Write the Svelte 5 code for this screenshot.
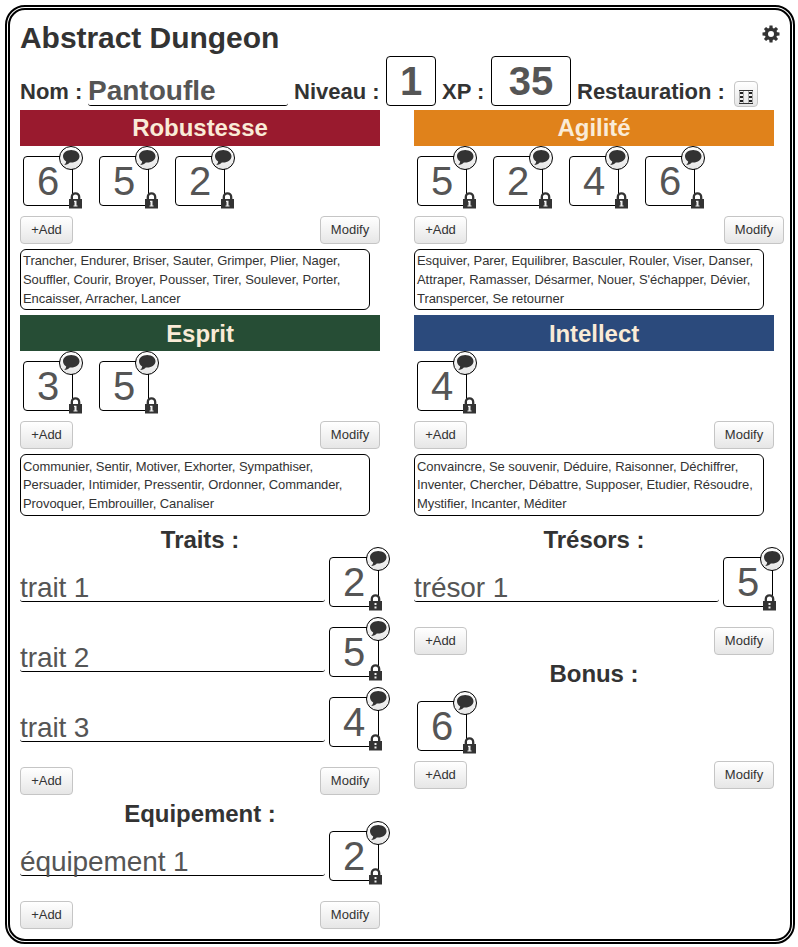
<script>
  const stats = [
    {
      name: 'Robustesse', color: '#991a2e', dice: [6, 5, 2],
      verbs: ['Trancher, Endurer, Briser, Sauter, Grimper, Plier, Nager,', 'Souffler, Courir, Broyer, Pousser, Tirer, Soulever, Porter,', 'Encaisser, Arracher, Lancer']
    },
    {
      name: 'Agilité', color: '#e0821b', dice: [5, 2, 4, 6], wide: true,
      verbs: ['Esquiver, Parer, Equilibrer, Basculer, Rouler, Viser, Danser,', "Attraper, Ramasser, Désarmer, Nouer, S'échapper, Dévier,", 'Transpercer, Se retourner']
    },
    {
      name: 'Esprit', color: '#264d35', dice: [3, 5],
      verbs: ['Communier, Sentir, Motiver, Exhorter, Sympathiser,', 'Persuader, Intimider, Pressentir, Ordonner, Commander,', 'Provoquer, Embrouiller, Canaliser']
    },
    {
      name: 'Intellect', color: '#2b4a7c', dice: [4],
      verbs: ['Convaincre, Se souvenir, Déduire, Raisonner, Déchiffrer,', 'Inventer, Chercher, Débattre, Supposer, Etudier, Résoudre,', 'Mystifier, Incanter, Méditer']
    }
  ];
  const traits = [['trait 1', 2], ['trait 2', 5], ['trait 3', 4]];
  const teeth = [0, 45, 90, 135, 180, 225, 270, 315];
</script>

{#snippet die(value, dotted = false)}
  <div class="die" class:single={dotted}>
    {value}
    <span class="note">
      <svg width="20" height="18" viewBox="0 0 20 18">
        <path d="M10.200 1C5.600 1 2 3.800 2 7.300c0 2.200 1.300 4 3.200 5.100-.2 1.500-.9 2.600-2.100 3.600 2.600-.1 4.500-1 5.700-2.500.5.1.9.1 1.400.1 4.600 0 8.300-2.800 8.300-6.300S14.800 1 10.200 1z" fill="#333" />
      </svg>
    </span>
    <svg class="lock" width="13" height="17" viewBox="0 0 13 17">
      <path d="M2.800 8V5a3.700 3.700 0 0 1 7.400 0V8" fill="none" stroke="#333" stroke-width="2.300" />
      <path d="M0 7h13v9.500H0z" fill="#333" />
      {#if dotted}
        <path d="M5.500 9h2v2h-2zM5.500 12.500h2v2h-2z" fill="#eee" />
      {:else}
        <path d="M5 8.800h2.500v4.700H8.500v1h-4v-1h1V10H5z" fill="#eee" />
      {/if}
    </svg>
  </div>
{/snippet}

{#snippet actions(wide = false)}
  <div class="actions" class:wide>
    <button>+Add</button>
    <button class="modify">Modify</button>
  </div>
{/snippet}

{#snippet item(name, value)}
  <div class="item">
    <div class="item-name">{name}</div>
    {@render die(value, true)}
  </div>
{/snippet}

<main>
  <header>
    <h1>Abstract Dungeon</h1>
    <svg class="gear" width="18" height="18" viewBox="-9 -9 18 18">
      {#each teeth as angle}
        <path d="M-1.900 -4.500L-1.500 -8.500H1.500L1.900 -4.500z" fill="#333" transform="rotate({angle})" />
      {/each}
      <circle r="4.600" fill="none" stroke="#333" stroke-width="3.200" />
    </svg>
  </header>
  <div class="identity">
    <span class="label nom">Nom :</span>
    <span class="name">Pantoufle</span>
    <span class="label niveau">Niveau :</span>
    <span class="box level">1</span>
    <span class="label xp">XP :</span>
    <span class="box points">35</span>
    <span class="label rest">Restauration :</span>
    <button class="restore" aria-label="Restauration">
      <svg width="14" height="14" viewBox="0 0 14 14" fill="none">
        <path d="M0 .5h14M0 13.500h14" stroke="#333" />
        <path d="M.5 1v12M4.500 1v12M9.500 1v12M13.500 1v12" stroke="#aaa" />
        <path d="M1 2h3v2H1zM1 6h3v2H1zM1 10h3v2H1zM10 2h3v2h-3zM10 6h3v2h-3zM10 10h3v2h-3z" fill="#222" />
      </svg>
    </button>
  </div>

  <div class="stats">
    {#each stats as stat, i}
      <section>
        <h2 class="bar" class:low={i > 1} style:background={stat.color}>{stat.name}</h2>
        <div class="dice">
          {#each stat.dice as value}{@render die(value)}{/each}
        </div>
        {@render actions(stat.wide)}
        <div class="verbs" class:tall={i > 1}>
          {#each stat.verbs as line}<div>{line}</div>{/each}
        </div>
      </section>
    {/each}
  </div>

  <div class="lists">
    <section>
      <h2>Traits :</h2>
      {#each traits as [name, value]}{@render item(name, value)}{/each}
      {@render actions()}
      <h2>Equipement :</h2>
      {@render item('équipement 1', 2)}
      {@render actions()}
    </section>
    <section>
      <h2>Trésors :</h2>
      {@render item('trésor 1', 5)}
      {@render actions()}
      <h2>Bonus :</h2>
      <div class="dice">{@render die(6)}</div>
      {@render actions()}
    </section>
  </div>
</main>

<style>
  :global(body) { background: #fff; }
  main {
    box-sizing: border-box;
    width: 790px;
    height: 939px;
    margin: 5px 0 0 5px;
    padding: 0 10px;
    border: 5px double #000;
    border-radius: 20px;
    font-family: 'Liberation Sans', Arial, sans-serif;
    font-size: 13px;
    color: #333;
  }
  h1, h2 { margin: 0; font-weight: bold; }
  header { display: flex; justify-content: space-between; height: 46px; }
  h1 { font-size: 30px; line-height: 56px; white-space: nowrap; letter-spacing: -0.05px; }
  .gear { margin: 15px 0 0; }
  .identity { display: flex; align-items: flex-end; height: 54px; box-sizing: border-box; }
  .identity > * { box-sizing: border-box; flex: none; margin-bottom: 4px; white-space: nowrap; }
  .label { font-size: 22px; font-weight: bold; line-height: 30px; }
  .identity .label { margin-bottom: 3px; }
  .nom { width: 68px; }
  .name {
    width: 200px;
    height: 33px;
    border-bottom: 1px solid #000;
    border-radius: 3px;
    font-size: 28px;
    font-weight: bold;
    line-height: 36px;
    color: #555;
  }
  .niveau { width: 98px; padding-left: 6px; }
  .box {
    height: 50px;
    border: 1px solid #000;
    border-radius: 4px;
    font-size: 40px;
    font-weight: bold;
    line-height: 49px;
    text-align: center;
    color: #555;
  }
  .level { width: 50px; }
  .xp { width: 55px; padding-left: 6px; }
  .points { width: 80px; }
  .rest { width: 163px; padding-left: 6px; }
  button {
    box-sizing: border-box;
    width: 53px;
    height: 28px;
    padding: 0;
    border: 1px solid #c5c5c5;
    border-radius: 4px;
    background: linear-gradient(#fff, #e6e6e6);
    font: 13px/26px 'Liberation Sans', Arial, sans-serif;
    color: #333;
  }
  .modify { width: 60px; }
  .identity .restore { width: 24px; height: 26px; margin-bottom: 3px; display: flex; align-items: flex-end; justify-content: center; padding-bottom: 2px; }
  .stats, .lists { display: grid; grid-template-columns: 360px 360px; column-gap: 34px; }
  h2 { height: 36px; font-size: 24px; line-height: 37px; text-align: center; letter-spacing: -0.05px; }
  .bar { color: #faebd7; line-height: 36px; }
  .bar.low { line-height: 38px; }
  .dice { display: flex; gap: 26px; padding: 10px 3px; }
  .die {
    position: relative;
    box-sizing: border-box;
    flex: none;
    width: 50px;
    height: 50px;
    border: 1px solid #000;
    border-radius: 4px;
    font-size: 40px;
    line-height: 49px;
    text-align: center;
    color: #555;
  }
  .note {
    position: absolute;
    top: -11px;
    right: -11px;
    box-sizing: border-box;
    width: 24px;
    height: 24px;
    border: 1px solid #000;
    border-radius: 50%;
    background: linear-gradient(#fff, #e6e6e6);
    display: flex;
    align-items: center;
    justify-content: center;
  }
  .single .note { right: -12px; }
  .lock { position: absolute; right: -10px; bottom: -4px; }
  .single .lock { right: -4px; bottom: -5px; }
  .actions { display: flex; justify-content: space-between; height: 28px; }
  .actions.wide { margin-right: -10px; }
  .verbs {
    box-sizing: border-box;
    width: 350px;
    height: 61px;
    margin: 5px 0;
    padding: 1px 2px;
    border: 1px solid #000;
    border-radius: 6px;
    line-height: 19px;
    letter-spacing: -0.055px;
    white-space: nowrap;
  }
  .verbs.tall { height: 62px; line-height: 18.6px; padding-top: 2.5px; letter-spacing: -0.08px; }
  .item { display: flex; justify-content: space-between; align-items: flex-start; width: 359px; padding-bottom: 20px; }
  .item-name {
    box-sizing: border-box;
    width: 305px;
    height: 45px;
    padding-top: 14px;
    border-bottom: 1px solid #000;
    border-radius: 3px;
    font-size: 28px;
    line-height: 34px;
    letter-spacing: -0.1px;
    color: #555;
  }
</style>
